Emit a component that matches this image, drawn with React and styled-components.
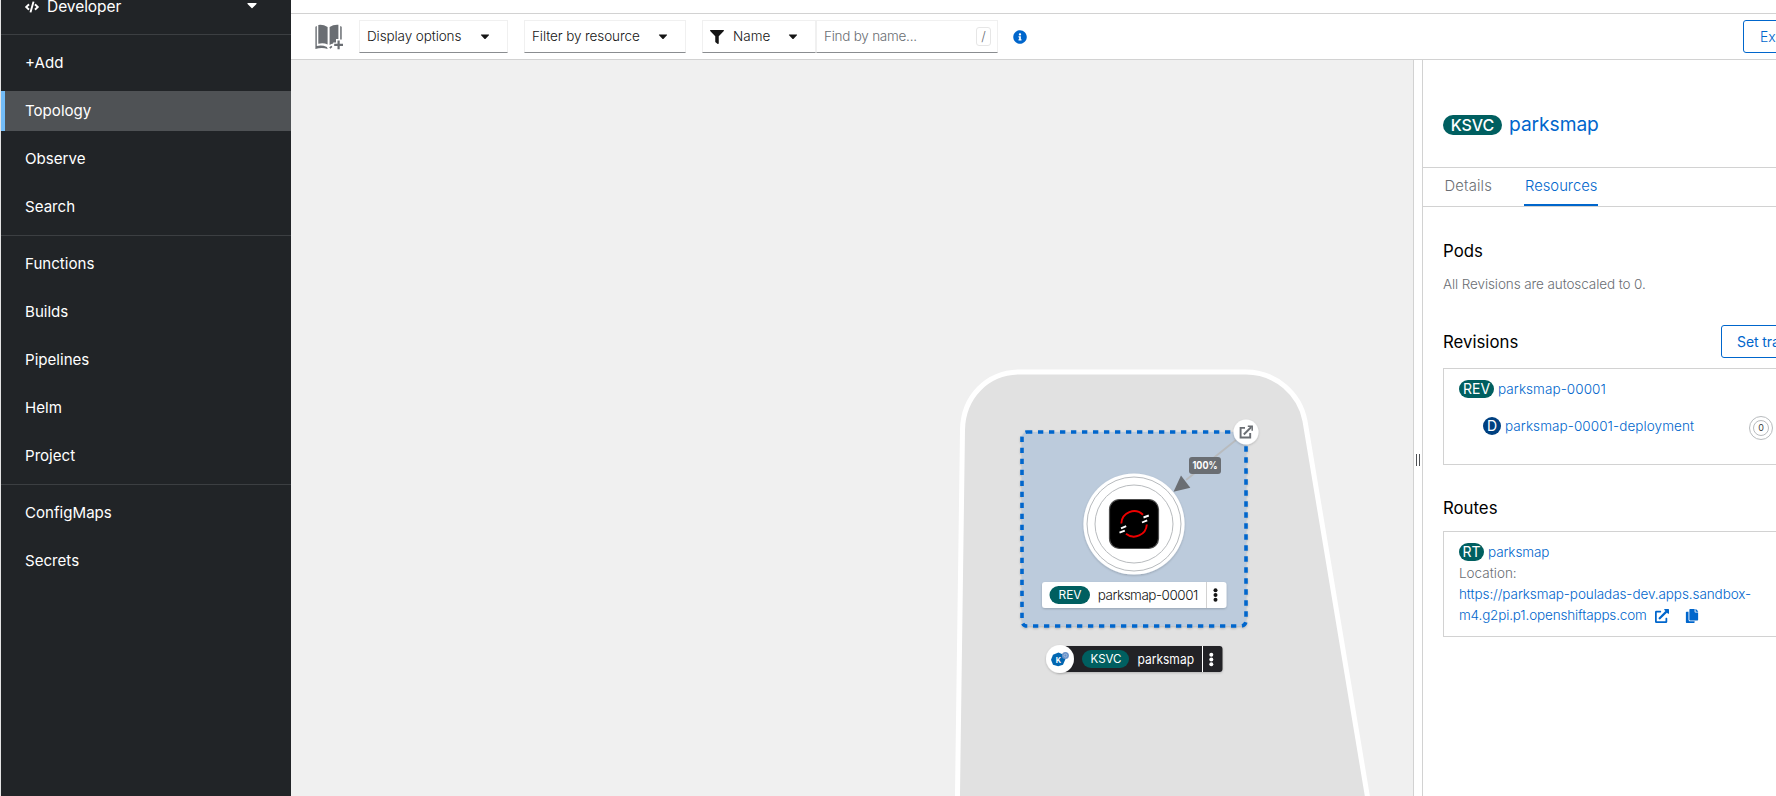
import React from "react";
import styled, { createGlobalStyle, css } from "styled-components";
import { FaCaretDown, FaCode, FaFilter, FaInfoCircle, FaExternalLinkAlt, FaCopy } from "react-icons/fa";

const blue = "#0066cc";
const teal = "#005f60";
const line = "#d2d2d2";

const Global = createGlobalStyle`
  *, *::before, *::after { box-sizing: border-box; }
  html, body, #root { height: 100%; margin: 0; }
  body {
    font-family: Inter, "Liberation Sans", sans-serif;
    font-size: 13.5px;
    font-weight: 300;
    line-height: 21px;
    color: #151515;
    background: #fff;
    overflow: hidden;
  }
  svg { display: block; flex: none; }
`;

const Page = styled.div`
  display: flex;
  width: 1776px;
  height: 796px;
  padding-left: 1px;
  background: #e4e4e4;
  overflow: hidden;
`;

const Sidebar = styled.nav`
  width: 290px;
  flex: none;
  background: #212427;
  color: #fff;
  font-size: 15.1px;
  font-weight: 400;
`;

const Perspective = styled.div`
  display: flex;
  align-items: flex-start;
  height: 34px;
  padding: 0 31px 0 24px;
  line-height: 20px;

  span { flex: 1; margin: -3px 0 0 8px; font-size: 15.5px; letter-spacing: -0.05px; }
  > svg:last-child { margin-top: -3px; }
`;

const NavGroup = styled.div`
  display: flex;
  flex-direction: column;
  gap: 8px;
  padding: 8px 0;
  border-top: 1px solid #3c3f42;
`;

const NavItem = styled.div`
  height: 40px;
  padding-left: 24px;
  line-height: 39px;
  ${(p) => p.$active && css`
    background: #4f5255;
    box-shadow: inset 4px 0 #73bcf7;
  `}
`;

const Main = styled.main`
  display: flex;
  flex-direction: column;
  flex: 1;
  min-width: 0;
  background: #fff;
`;

const Toolbar = styled.header`
  display: flex;
  align-items: center;
  height: 47px;
  margin-top: 13px;
  border: solid ${line};
  border-width: 1px 0;
  padding-left: 24px;
  flex: none;
  white-space: nowrap;
`;

const Field = styled.div`
  display: flex;
  align-items: center;
  width: ${(p) => p.$w}px;
  height: 33px;
  margin-left: ${(p) => p.$gap || 0}px;
  padding: 0 ${(p) => p.$right || 15}px 0 7px;
  border: 1px solid #f0f0f0;
  border-bottom-color: #8a8d90;
  color: ${(p) => (p.$muted ? "#6a6e73" : "#151515")};
  letter-spacing: ${(p) => p.$ls || 0}px;

  > span { flex: 1; }
`;

const FieldLabel = styled.span`
  padding-left: 9px;
`;

const Key = styled.kbd`
  width: 15px;
  height: 19px;
  border: 1px solid #e6e6e6;
  border-radius: 3px;
  font: 300 13px/16px Inter, sans-serif;
  text-align: center;
`;

const InfoIcon = styled(FaInfoCircle)`
  margin-left: 15px;
  color: ${blue};
`;

const OutlineButton = styled.button`
  flex: none;
  width: 180px;
  height: 33px;
  padding: 0 0 0 ${(p) => p.$pad}px;
  margin-left: ${(p) => (p.$push ? "auto" : 0)};
  margin-right: ${(p) => p.$bleed}px;
  border: 1px solid ${blue};
  border-radius: 3px;
  background: #fff;
  color: ${blue};
  font-family: inherit;
  font-size: 14px;
  font-weight: ${(p) => p.$weight || 300};
  letter-spacing: -0.1px;
  line-height: 29px;
  text-align: left;
  white-space: nowrap;
`;

const Body = styled.div`
  display: flex;
  flex: 1;
  min-height: 0;
`;

const Canvas = styled.section`
  width: 1122px;
  flex: none;
  background: #f0f0f0;
  overflow: hidden;
`;

const Splitter = styled.div`
  display: flex;
  align-items: center;
  justify-content: center;
  gap: 2px;
  width: 10px;
  flex: none;
  border: solid ${line};
  border-width: 0 1px;
  padding-top: 63px;

  i { width: 1px; height: 12px; background: #4f5255; }
`;

const Panel = styled.aside`
  flex: 1;
  min-width: 0;
  overflow: hidden;
`;

const PanelHeader = styled.div`
  display: flex;
  align-items: center;
  gap: 7px;
  height: 108px;
  padding: 22px 0 0 20px;
  border-bottom: 1px solid ${line};
  color: ${blue};
  font-size: 19.2px;
  font-weight: 400;
  line-height: 24px;

  > span:last-child { margin-top: -2px; letter-spacing: -0.05px; }
`;

const Badge = styled.span`
  flex: none;
  width: ${(p) => p.$w}px;
  height: ${(p) => p.$h || 18}px;
  border-radius: 20px;
  background: ${(p) => p.$bg || teal};
  color: #fff;
  font-size: ${(p) => p.$fs || 14}px;
  font-weight: ${(p) => p.$weight || 400};
  line-height: ${(p) => p.$h || 18}px;
  text-align: center;
`;

const Tabs = styled.div`
  display: flex;
  gap: 31px;
  height: 39px;
  padding-left: 20.5px;
  border-bottom: 1px solid ${line};
  font-size: 14.8px;
`;

const Tab = styled.div`
  height: 38px;
  line-height: 36px;
  color: ${(p) => (p.$active ? blue : "#6a6e73")};
  letter-spacing: ${(p) => p.$ls || 0}px;
  padding: 0 1px;
  border-bottom: ${(p) => (p.$active ? `2px solid ${blue}` : "0")};
`;

const Content = styled.div`
  padding: 32px 0 0 20px;
`;

const Row = styled.div`
  display: flex;
  align-items: center;
  justify-content: space-between;
  height: ${(p) => p.$h}px;
  margin-top: ${(p) => p.$top || 0}px;
`;

const Heading = styled.h2`
  margin: 0;
  color: #000;
  font-size: 16.8px;
  font-weight: 400;
  line-height: 24px;
`;

const Muted = styled.p`
  margin: ${(p) => p.$top || 0}px 0 0;
  color: #6a6e73;
  letter-spacing: ${(p) => p.$ls || 0}px;
`;

const Card = styled.div`
  width: 400px;
  height: ${(p) => p.$h}px;
  margin-top: ${(p) => p.$top}px;
  padding: 11px 0 0 15px;
  border: 1px solid ${line};
`;

const Item = styled.div`
  display: flex;
  align-items: center;
  gap: 4px;
  height: 18px;
  margin: ${(p) => p.$top || 0}px 0 0 ${(p) => p.$indent || 0}px;
`;

const Link = styled.a`
  color: ${blue};
  letter-spacing: ${(p) => p.$ls || 0}px;
  white-space: nowrap;
`;

const LinkLine = styled.div`
  display: flex;
  align-items: center;
  height: 21px;
  color: ${blue};

  svg:nth-of-type(1) { margin-left: 8px; }
  svg:nth-of-type(2) { margin-left: 16px; }
`;

const PodRing = styled.div`
  display: flex;
  align-items: center;
  justify-content: center;
  width: 24px;
  height: 24px;
  margin: 3px 0 0 51px;
  border: 1px solid #b8bbbe;
  border-radius: 50%;

  span {
    width: 16px;
    height: 16px;
    border: 1px solid #b8bbbe;
    border-radius: 50%;
    font-size: 9px;
    font-weight: 400;
    line-height: 14px;
    text-align: center;
    color: #3c3f42;
  }
`;

const GraphText = styled.text`
  font-family: Inter, sans-serif;
  font-size: ${(p) => p.$s}px;
  font-weight: ${(p) => p.$w || 300};
  fill: ${(p) => p.$c || "#151515"};
`;

const CatalogIcon = () => (
  <svg width="28" height="26" viewBox="0 0 28 26" fill="#6a6e73">
    <path d="M3.300 1Q8 .2 12.600 3V20.500Q8.500 18.600 3.300 19.800Z" />
    <path d="M14.600 3Q18.500.4 23.400.800V15H21V18.400H18.200V19.400Q16.400 19.600 14.600 21Z" />
    <path d="M.4 2.700 1.800 2V22Q6.500 20.600 11.900 22.900L12.700 25Q7 22.800.4 25Z" />
    <path d="M25.200 2 26.700 2.700V15.400H25.200ZM14.200 23.200 16.400 21.800 17.400 23 15.400 24.800Z" />
    <path d="M22.500 16.500h2.200v3.200H28v2.200h-3.300v3.400h-2.200v-3.400h-3.300v-2.200h3.300Z" />
  </svg>
);

const External = () => (
  <g fill="none" stroke="#6a6e73" strokeWidth="1.900">
    <path d="M1245 427.900H1240.600V437.500H1250.200V433" />
    <path d="M1243.800 434.500 1251.300 427" />
    <path d="M1247.800 426.300H1252.200V430.700" strokeWidth="1.500" />
  </g>
);

const Kebab = ({ x, y, fill }) => (
  <g fill={fill}>
    {[-4.8, 0, 4.8].map((d) => <circle key={d} cx={x} cy={y + d} r="2" />)}
  </g>
);

function Topology() {
  return (
    <svg width="1122" height="736" viewBox="291 60 1122 736">
      <defs>
        <filter id="shadow" x="-20%" y="-20%" width="140%" height="150%">
          <feDropShadow dx="0" dy="1" stdDeviation="1" floodColor="#030303" floodOpacity="0.2" />
        </filter>
      </defs>
      <path
        d="M957 830 962.500 430C963 397 987 372 1020 372H1246C1276 372 1300 394 1305 421L1373 830Z"
        fill="#e1e1e1" stroke="#fff" strokeWidth="5"
      />
      <rect
        x="1022" y="432" width="224" height="194" rx="5" filter="url(#shadow)"
        fill="#bccbdc" stroke={blue} strokeWidth="3.600" strokeDasharray="5.300 5.700"
      />
      <path d="M1236 440 1186 480" stroke="#b8bbbe" strokeWidth="1.800" />
      <path d="M1173.500 491.800 1181 475.500 1190.300 487.700Z" fill="#6a6e73" />
      <rect x="1189" y="457" width="32" height="17" rx="3" fill="#6a6e73" />
      <GraphText $s={10.3} $w={700} $c="#fff" x="1205" y="469.300" textAnchor="middle" textLength="25" lengthAdjust="spacingAndGlyphs">100%</GraphText>

      <circle cx="1246" cy="432" r="12.500" fill="#fff" filter="url(#shadow)" />
      <External />

      <circle cx="1134" cy="524" r="50.600" fill="#fff" filter="url(#shadow)" />
      <circle cx="1134" cy="524" r="47" fill="none" stroke="#b8bbbe" />
      <circle cx="1134" cy="524" r="39" fill="none" stroke="#b8bbbe" />
      <rect x="1109.500" y="499.500" width="49" height="49" rx="10" fill="#000" stroke="#4d4d4d" strokeWidth="1.200" />
      <g fill="none" stroke="#e00" strokeWidth="1.900">
        <path d="M1121.300 523.500A12.800 12.800 0 0 1 1143 514.800" />
        <path d="M1146.800 524.500A12.800 12.800 0 0 1 1126 533.700" />
      </g>
      <g stroke="#fff" strokeWidth="1.900">
        <path d="M1143.500 517.500 1148.800 515.500M1142 522.500 1147.200 520.300M1121 528.300 1126.200 526.100M1119.500 532.700 1124.800 530.700" />
      </g>

      <rect x="1042" y="582" width="184.500" height="26" rx="3" fill="#fff" filter="url(#shadow)" />
      <path d="M1206.500 582V608" stroke={line} />
      <rect x="1049.500" y="586" width="40.500" height="18" rx="9" fill={teal} />
      <GraphText $s={11.5} $w={400} $c="#fff" x="1058.500" y="599.200" textLength="23" lengthAdjust="spacingAndGlyphs">REV</GraphText>
      <GraphText $s={13.5} x="1097.800" y="600" textLength="100.500">parksmap-00001</GraphText>
      <Kebab x={1215.5} y={595} fill="#151515" />

      <rect x="1056" y="646" width="166.500" height="26" rx="3" fill="#212427" filter="url(#shadow)" />
      <path d="M1202.500 646V672" stroke="#fff" />
      <rect x="1082" y="650" width="47" height="18" rx="9" fill={teal} />
      <GraphText $s={11.5} $w={400} $c="#fff" x="1090.500" y="663.200" textLength="31" lengthAdjust="spacingAndGlyphs">KSVC</GraphText>
      <GraphText $s={13.5} $w={400} $c="#fff" x="1137.500" y="664" textLength="56.500" lengthAdjust="spacingAndGlyphs">parksmap</GraphText>
      <Kebab x={1211.3} y={659.5} fill="#fff" />
      <circle cx="1060" cy="659" r="14" fill="#fff" filter="url(#shadow)" />
      <path d="M1058.500 652.600 1063.700 654.800 1065.300 659.500 1063 664.800 1058.200 666.200 1053 664.800 1051 659.800 1053 654.800Z" fill="#0066b1" />
      <circle cx="1065.400" cy="655.500" r="3.500" fill="#6b93c9" />
      <circle cx="1065.400" cy="655.500" r="1.500" fill="none" stroke="#a6c0e2" strokeWidth=".8" />
      <GraphText $s={7.5} $w={700} $c="#fff" x="1055.700" y="662.700">K</GraphText>
    </svg>
  );
}

const navGroups = [
  ["+Add", "Topology", "Observe", "Search"],
  ["Functions", "Builds", "Pipelines", "Helm", "Project"],
  ["ConfigMaps", "Secrets"],
];

const Caret = () => <FaCaretDown size={14} viewBox="0 30 320 512" />;

export default function App() {
  return (
    <>
      <Global />
      <Page>
        <Sidebar>
          <Perspective>
            <FaCode size={14} />
            <span>Developer</span>
            <FaCaretDown size={16} />
          </Perspective>
          {navGroups.map((items) => (
            <NavGroup key={items[0]}>
              {items.map((name) => (
                <NavItem key={name} $active={name === "Topology"}>{name}</NavItem>
              ))}
            </NavGroup>
          ))}
        </Sidebar>
        <Main>
          <Toolbar>
            <CatalogIcon />
            <Field $w={149} $gap={16} $ls={-0.1}><span>Display options</span><Caret /></Field>
            <Field $w={162} $gap={16} $ls={-0.1}><span>Filter by resource</span><Caret /></Field>
            <Field $w={114} $gap={16}>
              <FaFilter size={14} /><FieldLabel>Name</FieldLabel><Caret />
            </Field>
            <Field $w={182} $right={6} $muted $ls={-0.25}><span>Find by name...</span><Key>/</Key></Field>
            <InfoIcon size={14} />
            <OutlineButton $push $bleed={-147} $pad={16}>Export application</OutlineButton>
          </Toolbar>
          <Body>
            <Canvas><Topology /></Canvas>
            <Splitter><i /><i /></Splitter>
            <Panel>
              <PanelHeader>
                <Badge $w={59} $h={20} $fs={16} $weight={500}>KSVC</Badge>
                <span>parksmap</span>
              </PanelHeader>
              <Tabs>
                <Tab $ls={0.15}>Details</Tab>
                <Tab $active>Resources</Tab>
              </Tabs>
              <Content>
                <Heading>Pods</Heading>
                <Muted $top={11} $ls={-0.1}>All Revisions are autoscaled to 0.</Muted>
                <Row $h={33} $top={30}>
                  <Heading>Revisions</Heading>
                  <OutlineButton $bleed={-125} $weight={400} $pad={15}>Set traffic distribution</OutlineButton>
                </Row>
                <Card $h={97} $top={10}>
                  <Item>
                    <Badge $w={35}>REV</Badge>
                    <Link $ls={0.07}>parksmap-00001</Link>
                  </Item>
                  <Item $top={19} $indent={24}>
                    <Badge $w={18} $bg="#004080">D</Badge>
                    <Link $ls={0.08}>parksmap-00001-deployment</Link>
                    <PodRing><span>0</span></PodRing>
                  </Item>
                </Card>
                <Row $h={24} $top={31}><Heading>Routes</Heading></Row>
                <Card $h={106} $top={11}>
                  <Item>
                    <Badge $w={25}>RT</Badge>
                    <Link $ls={-0.1}>parksmap</Link>
                  </Item>
                  <Muted $top={2}>Location:</Muted>
                  <LinkLine><Link $ls={-0.08}>https://parksmap-pouladas-dev.apps.sandbox-</Link></LinkLine>
                  <LinkLine>
                    <Link $ls={-0.16}>m4.g2pi.p1.openshiftapps.com</Link>
                    <FaExternalLinkAlt size={14} />
                    <FaCopy size={14} />
                  </LinkLine>
                </Card>
              </Content>
            </Panel>
          </Body>
        </Main>
      </Page>
    </>
  );
}
